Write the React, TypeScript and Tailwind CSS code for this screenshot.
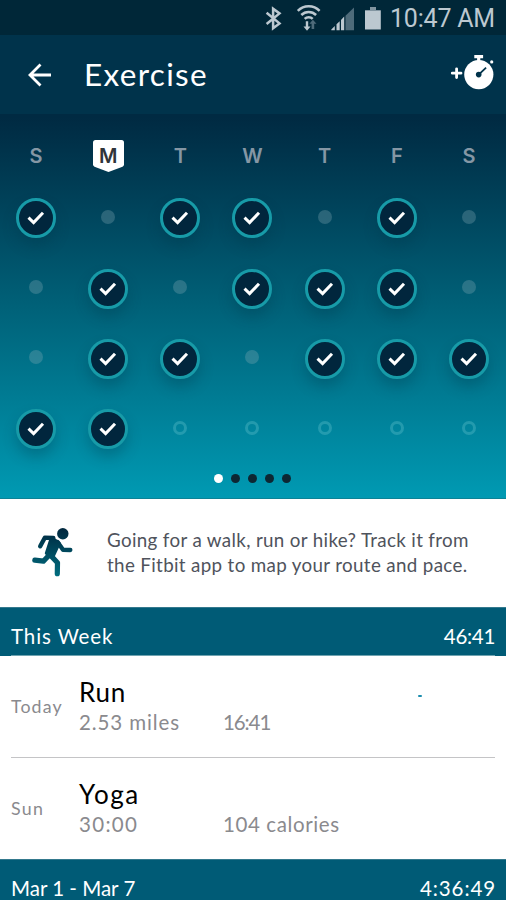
import React from "react";

const days = ["S", "M", "T", "W", "T", "F", "S"];

// x: exercised, o: rest day, f: still to come
const weeks = ["xoxxoxo", "oxoxxxo", "oxxoxxx", "xxfffff"];

function StatusBar() {
  return (
    <div className="flex h-[35px] shrink-0 items-center justify-end bg-[#002738] pr-[11px] text-[#bcc8d0]">
      <svg width="118" height="30" viewBox="0 0 118 30" className="mb-[2px] mr-[8px] shrink-0">
        <path d="M2.6 10.8 15.5 21.4 9.1 26.2V6.8L15.5 11.4 2.6 22" fill="none" stroke="#bcc8d0" strokeWidth="2.5" />
        <g fill="none" stroke="#bcc8d0" strokeWidth="2.5">
          <path d="M33.8 8.9a15.2 15.2 0 0 1 21.8 0" />
          <path d="M37.3 13a10.4 10.4 0 0 1 14.8 0" />
          <path d="M40.7 16.8a5.7 5.7 0 0 1 8 0" />
        </g>
        <path d="M41.8 19.2h2.4v5.4h2.3L43 28.8l-3.5-4.2h2.3z" fill="#bcc8d0" />
        <path d="M47.6 27h2.6v-5.2h2.3l-3.6-4-3.5 4h2.2z" fill="#4e6b7a" />
        <path d="M90 5.5V28.3H81.5V13.8z" fill="#4e6b7a" />
        <path d="M67.3 28.3v-.8l3.5-3.4v4.2zM72.5 28.3v-6l3.2-3.1v9.1zM77 28.3V17.9l3.2-3.4v13.8z" fill="#bcc8d0" />
        <path d="M101 8.3h15.8v19.2H101z" fill="#bcc8d0" />
        <path d="M106 5h6v3.3h-6z" fill="#8195a0" />
      </svg>
      <span className="mt-[3px] font-[Roboto,sans-serif] text-[25px] leading-[32px] tracking-[-0.2px]">10:47 AM</span>
    </div>
  );
}

function Header() {
  return (
    <header className="flex h-[79px] shrink-0 items-center bg-[#00334b] pl-[28px] pr-[11px] text-white">
      <svg width="24" height="24" viewBox="0 0 24 24" fill="none" stroke="white" strokeWidth="2.8">
        <path d="M23 12H2M12.5 1.5 2 12l10.5 10.5" />
      </svg>
      <h1 className="mb-[2px] ml-[32px] text-[31.5px] leading-[40px] tracking-[1.3px]">Exercise</h1>
      <svg width="46" height="38" viewBox="0 0 46 38" className="mb-[4px] ml-auto">
        <path d="M3.3 19.2H12M7.6 14.8v8.8" stroke="white" strokeWidth="2.8" strokeLinecap="round" />
        <circle cx="29.8" cy="20.6" r="14.6" fill="white" />
        <path d="M25.3 2.6h8.8M29.7 3v5" stroke="white" strokeWidth="3.2" />
        <circle cx="42.7" cy="7.9" r="1.6" fill="white" />
        <path d="m29.7 20.6 7.4-7" stroke="#00334b" strokeWidth="1.8" />
        <circle cx="29.7" cy="20.6" r="2.8" fill="#00334b" />
      </svg>
    </header>
  );
}

function DayMark({ kind }: { kind: string }) {
  if (kind === "x") {
    return (
      <span className="flex size-[40px] items-center justify-center rounded-full border-3 border-[#179ba8] bg-[#01263d] shadow-[0_8px_14px_rgba(0,50,70,0.28)]">
        <svg width="18" height="16" viewBox="0 0 18 16" fill="none" stroke="white" strokeWidth="3">
          <path d="m1.5 7.7 5.1 4.9L16 2.7" />
        </svg>
      </span>
    );
  }
  if (kind === "o") return <span className="mb-[3px] size-[14px] rounded-full bg-[#8ab0b8]/30" />;
  return <span className="mb-[3px] size-[14px] rounded-full border-3 border-[#4db5c4]/45" />;
}

function Calendar() {
  return (
    <section className="h-[385px] shrink-0 border-b border-[#0c8296] bg-linear-to-b from-[#002a42] from-1% via-[#006178] via-50% to-[#009ab3] to-100%">
      <div className="grid h-[69px] w-[505px] grid-cols-7 justify-items-center pt-[26px] font-[Inter,sans-serif] text-[20px] font-semibold leading-[32px]">
        {days.map((d, i) =>
          i === 1 ? (
            <span key={i} className="relative flex h-[32px] w-[31px] justify-center">
              <svg className="absolute inset-0" width="31" height="32" viewBox="0 0 31 32">
                <path d="M2.5 0h26Q31 0 31 2.5V24.5Q31 26 29.5 26.7L15.5 32 1.5 26.7Q0 26 0 24.5V2.5Q0 0 2.5 0z" fill="white" />
              </svg>
              <span className="relative text-[#30353a]">{d}</span>
            </span>
          ) : (
            <span key={i} className="text-[#8597a5]">{d}</span>
          ),
        )}
      </div>
      <div className="grid h-[281.4px] w-[505px] grid-cols-7 grid-rows-4">
        {weeks.flatMap((w, r) =>
          [...w].map((k, c) => (
            <div key={`${r}-${c}`} className="flex items-center justify-center">
              <DayMark kind={k} />
            </div>
          )),
        )}
      </div>
      <div className="flex h-[28px] w-[505px] items-center justify-center gap-[8px]">
        {[0, 1, 2, 3, 4].map((i) => (
          <span key={i} className={`size-[9px] rounded-full ${i === 0 ? "bg-white" : "bg-[#0d2733]"}`} />
        ))}
      </div>
    </section>
  );
}

function Tip() {
  return (
    <section className="flex h-[108px] shrink-0 items-center bg-white pl-[32px]">
      <svg width="42" height="50" viewBox="0 0 42 50" fill="none" strokeLinecap="round" strokeLinejoin="round" className="mb-[2px]">
        <defs>
          <linearGradient id="runner" gradientUnits="userSpaceOnUse" x1="0" y1="0" x2="0" y2="50">
            <stop offset="0" stopColor="#00253c" />
            <stop offset="1" stopColor="#006e80" />
          </linearGradient>
        </defs>
        <g stroke="url(#runner)" strokeWidth="4.4">
          <circle cx="30.8" cy="6.8" r="5.7" fill="url(#runner)" stroke="none" />
          <path d="m8.2 19.2 4.6-8.4 8.5.1" />
          <path d="m25.5 15 5.5 7.8 7.3.2" />
          <path d="M2.8 33.2l8.6 1 6.3-6.8 7.8 8.3-.2 11" strokeWidth="5.2" />
          <path d="m19.5 10.8 7.5 5.4-6 13-6.5-3z" fill="url(#runner)" strokeWidth="3.4" />
        </g>
      </svg>
      <p className="ml-[33px] text-[18.8px] leading-[24.6px] tracking-[0.34px] text-[#4f535c]">
        Going for a walk, run or hike? Track it from
        <br />
        the Fitbit app to map your route and pace.
      </p>
    </section>
  );
}

type WeekHeaderProps = { label: React.ReactNode; total: React.ReactNode };

function WeekHeader({ label, total }: WeekHeaderProps) {
  return (
    <div className="h-[49px] shrink-0 border-t border-[#34798d] bg-[#005b76] px-[11px]">
      <div className="flex h-[48px] justify-between border-b border-[#6fa3b0] pt-[13px] text-[20.5px] leading-[30px] text-white">
        {label}
        {total}
      </div>
    </div>
  );
}

type EntryProps = {
  day: React.ReactNode;
  name: React.ReactNode;
  first: React.ReactNode;
  second: React.ReactNode;
  spinner?: boolean;
};

function Entry({ day, name, first, second, spinner }: EntryProps) {
  return (
    <div className="mx-[11px] flex h-[101px] shrink-0 items-center pb-px text-[#8a8a8e]">
      <span className="w-[68px] text-[17.8px]">{day}</span>
      <div className="w-[144px]">
        <div className="text-[26px] leading-[32px] text-black">{name}</div>
        <div className="text-[20.5px] leading-[28px]">{first}</div>
      </div>
      <div className="w-[195px] pt-[32px] text-[20.5px] leading-[28px]">{second}</div>
      {spinner && <span className="mb-[21px] h-[2px] w-[4px] rounded-full bg-[#1b8dae]" />}
    </div>
  );
}

export default function App() {
  return (
    <main className="flex h-[900px] w-[506px] flex-col overflow-hidden bg-white font-[Lato,sans-serif]">
      <StatusBar />
      <Header />
      <Calendar />
      <Tip />
      <WeekHeader
        label={<span className="tracking-[0.9px]">This Week</span>}
        total={<span className="tracking-[-0.3px]">46:41</span>}
      />
      <Entry
        day={<span className="tracking-[1.1px]">Today</span>}
        name={<span className="tracking-[0.8px]">Run</span>}
        first={<span className="tracking-[0.9px]">2.53 miles</span>}
        second={<span className="tracking-[-1.1px]">16:41</span>}
        spinner
      />
      <div className="mx-[11px] h-px shrink-0 bg-[#c4c4c6]" />
      <Entry
        day={<span className="tracking-[1.3px]">Sun</span>}
        name={<span className="tracking-[1.6px]">Yoga</span>}
        first={<span className="tracking-[1.3px]">30:00</span>}
        second={<span className="tracking-[0.6px]">104 calories</span>}
      />
      <WeekHeader
        label={<span>Mar 1 - Mar 7</span>}
        total={<span className="-mr-px tracking-[0.9px]">4:36:49</span>}
      />
    </main>
  );
}
